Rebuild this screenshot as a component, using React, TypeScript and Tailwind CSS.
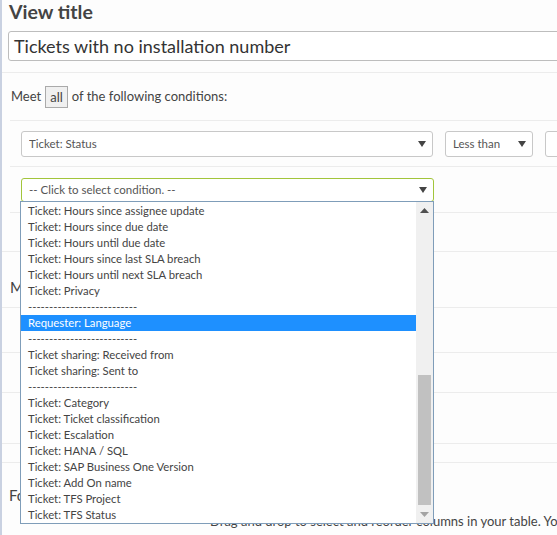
import React from 'react';

const font = { fontFamily: 'Lato, "Noto Sans", sans-serif' };

const options: { label: string; kind?: 'sep' | 'active' }[] = [
  { label: 'Ticket: Hours since assignee update' },
  { label: 'Ticket: Hours since due date' },
  { label: 'Ticket: Hours until due date' },
  { label: 'Ticket: Hours since last SLA breach' },
  { label: 'Ticket: Hours until next SLA breach' },
  { label: 'Ticket: Privacy' },
  { label: '--------------------------', kind: 'sep' },
  { label: 'Requester: Language', kind: 'active' },
  { label: '--------------------------', kind: 'sep' },
  { label: 'Ticket sharing: Received from' },
  { label: 'Ticket sharing: Sent to' },
  { label: '--------------------------', kind: 'sep' },
  { label: 'Ticket: Category' },
  { label: 'Ticket: Ticket classification' },
  { label: 'Ticket: Escalation' },
  { label: 'Ticket: HANA / SQL' },
  { label: 'Ticket: SAP Business One Version' },
  { label: 'Ticket: Add On name' },
  { label: 'Ticket: TFS Project' },
  { label: 'Ticket: TFS Status' },
];

const Caret = () => (
  <svg width="8" height="6" viewBox="0 0 8 6" className="shrink-0">
    <path d="M0 0 H8 L4 6 Z" fill="#444" />
  </svg>
);

const Select = ({ text, className }: { text: string; className: string }) => (
  <div
    className={`flex items-center justify-between bg-white rounded-[3px] border pl-[7px] pr-[6px] text-[11.5px] text-[#555] ${className}`}
  >
    <span className="truncate">{text}</span>
    <Caret />
  </div>
);

const ConditionList = () => (
  <div className="absolute left-[20px] top-[201px] w-[414px] h-[323px] border border-[#7f9db9] bg-white flex">
    <div className="flex-1 flex flex-col pt-[1px]">
      {options.map((o, i) => (
        <div
          key={i}
          className={`h-[16px] leading-[16px] pl-[7px] text-[11.3px] ${
            o.kind === 'active' ? 'bg-[#1e90ff] text-white' : 'text-[#444]'
          }`}
        >
          {o.label}
        </div>
      ))}
    </div>
    <div className="w-[17px] bg-[#f0f0f0] flex flex-col items-center">
      <div className="h-[17px] flex items-center justify-center">
        <svg width="9" height="5" viewBox="0 0 9 5">
          <path d="M0 5 L4.5 0 L9 5 Z" fill="#505050" />
        </svg>
      </div>
      <div className="flex-1 w-full flex flex-col">
        <div className="h-[156px]" />
        <div className="mx-auto w-[13px] h-[130px] bg-[#c1c1c1]" />
      </div>
      <div className="h-[17px] flex items-center justify-center">
        <svg width="9" height="5" viewBox="0 0 9 5">
          <path d="M0 0 L4.5 5 L9 0 Z" fill="#a3a3a3" />
        </svg>
      </div>
    </div>
  </div>
);

export default function App() {
  return (
    <div className="w-[557px] h-[535px] overflow-hidden relative bg-white flex" style={font}>
      <div className="w-[2px] bg-[#c9d1e1] shrink-0" />
      <div className="flex-1 flex flex-col bg-[#fdfdfd] text-[#444]">
        <h1 className="pl-[7px] text-[19.5px] font-bold leading-[24px] text-[#444]">View title</h1>
        <div className="mt-[7px] ml-[6px] -mr-[8px] h-[30px] border border-[#bdbdbd] rounded-[3px] bg-white flex items-center pl-[5px] text-[18px] text-[#333]">
          Tickets with no installation number
        </div>
        <div className="mt-[11px] border-t border-[#ececec]" />
        <div className="h-[47px] flex items-center pl-[9px] text-[13px] text-[#444]">
          <span>Meet</span>
          <span className="mx-[4px] px-[4px] h-[22px] leading-[20px] border border-[#aaa] bg-[#f0f0f0]">all</span>
          <span>of the following conditions:</span>
        </div>
        <div className="ml-[8px] border-t border-[#ececec]" />
        <div className="h-[45px] flex items-center pl-[19px] gap-[12px]">
          <Select text="Ticket: Status" className="w-[412px] h-[26px] border-[#c8c8c8]" />
          <Select text="Less than" className="w-[88px] h-[26px] border-[#c8c8c8]" />
          <div className="w-[40px] h-[26px] border border-[#c8c8c8] rounded-[3px] bg-white shrink-0" />
        </div>
        <div className="ml-[8px] border-t border-[#ececec]" />
        <div className="h-[45px] flex items-center pl-[19px]">
          <Select
            text="-- Click to select condition. --"
            className="w-[413px] h-[24px] border-[#a2c53b] text-[#444]"
          />
        </div>
        <div className="ml-[8px] border-t border-[#ececec]" />
        <div className="h-[39px] border-b border-[#ececec]" />
        <div className="h-[56px] flex items-center pl-[8px] text-[15px] border-b border-[#ececec]">
          <span className="pt-[16px]">Match</span>
        </div>
        <div className="h-[45px] border-b border-[#ececec]" />
        <div className="h-[40px] border-b border-[#ececec]" />
        <div className="h-[51px] border-b border-[#ececec]" />
        <div className="h-[19px] border-b border-[#ececec]" />
        <div className="h-[43px] flex items-end pl-[7px] text-[15px]">Formatting</div>
        <div className="pl-[208px] pt-[6px] text-[13px] text-[#444] whitespace-nowrap">
          Drag and drop to select and reorder columns in your table. You
        </div>
      </div>
      <div className="w-[4px] bg-[#b4bccb] shrink-0" />
      <ConditionList />
    </div>
  );
}
